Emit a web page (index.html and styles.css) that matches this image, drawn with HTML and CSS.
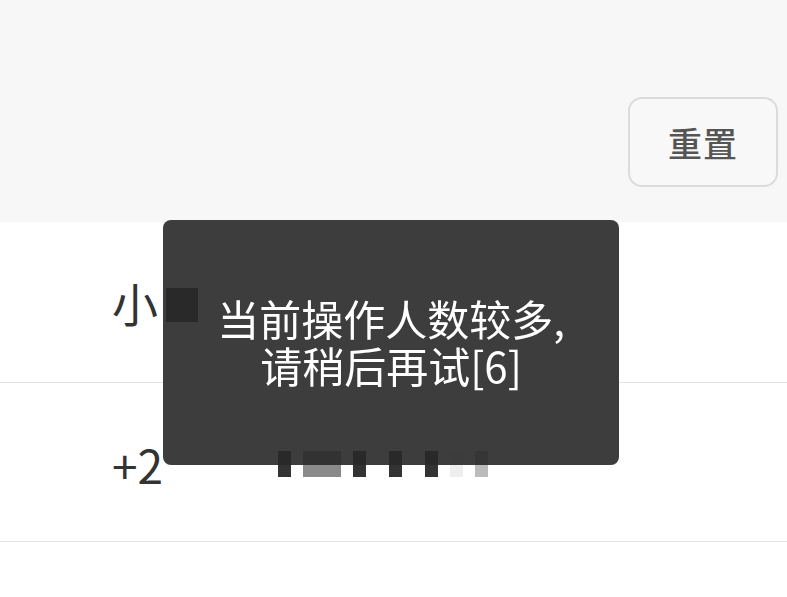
FILE: index.html
```html
<!DOCTYPE html>
<html lang="zh-CN">
<head>
    <meta charset="UTF-8">
    <meta name="viewport" content="width=device-width, initial-scale=1.0">
    <title>重置</title>
    <link rel="stylesheet" href="styles.css">
</head>
<body>
    <div class="header">
        <button class="btn-reset">重置</button>
    </div>

    <div class="list">
        <div class="row">
            <span class="label">小</span>
            <span class="mosaic mosaic-name">
                <i class="tile tile-dark tile-tall"></i>
            </span>
        </div>
        <div class="row">
            <span class="label">+2</span>
            <span class="mosaic mosaic-phone">
                <i class="tile tile-dark"></i>
                <i class="tile tile-gap"></i>
                <i class="tile tile-mid tile-wide"></i>
                <i class="tile tile-gap"></i>
                <i class="tile tile-dark"></i>
                <i class="tile tile-gap tile-wide-gap"></i>
                <i class="tile tile-dark"></i>
                <i class="tile tile-gap tile-wide-gap"></i>
                <i class="tile tile-dark"></i>
                <i class="tile tile-gap"></i>
                <i class="tile tile-faint"></i>
                <i class="tile tile-gap"></i>
                <i class="tile tile-light"></i>
            </span>
        </div>
    </div>

    <div class="toast">当前操作人数较多,<br>请稍后再试[6]</div>
</body>
</html>
```

FILE: styles.css
```css
* {
    margin: 0;
    padding: 0;
    box-sizing: border-box;
}

body {
    font-family: "Noto Sans CJK SC", "Noto Sans", sans-serif;
    background: #fff;
    width: 787px;
    height: 597px;
    overflow: hidden;
}

.header {
    height: 222px;
    background: #f7f7f7;
    display: flex;
    justify-content: flex-end;
    align-items: flex-start;
    padding: 97px 9px 0 0;
}

.btn-reset {
    width: 150px;
    height: 90px;
    border: 2px solid #dcdcdc;
    border-radius: 14px;
    background: #f8f8f8;
    color: #555;
    font-family: inherit;
    font-size: 34px;
    font-weight: 500;
    letter-spacing: 1px;
}

.row {
    display: flex;
    align-items: center;
    height: 161px;
    padding-left: 112px;
    border-bottom: 1px solid #e3e3e3;
}

.row + .row {
    height: 159px;
    padding-top: 4px;
}

.label {
    font-size: 46px;
    color: #333;
    line-height: 1;
}

.mosaic {
    display: flex;
    align-items: center;
}

.mosaic-name {
    margin-left: 8px;
    margin-top: 6px;
}

.mosaic-phone {
    margin-left: 115px;
    margin-top: 0;
}

.tile {
    display: block;
    width: 13px;
    height: 26px;
}

.tile-tall {
    width: 32px;
    height: 34px;
}

.tile-wide {
    width: 38px;
}

.tile-gap {
    width: 12px;
}

.tile-wide-gap {
    width: 23px;
}

.tile-dark {
    background: #333;
}

.tile-mid {
    background: #8a8a8a;
}

.tile-light {
    background: #bbb;
}

.tile-faint {
    background: #eee;
}

.toast {
    position: fixed;
    left: 163px;
    top: 220px;
    width: 456px;
    height: 245px;
    border-radius: 8px;
    background: rgba(40, 40, 40, 0.9);
    color: #fff;
    font-size: 42px;
    line-height: 47px;
    text-align: center;
    display: flex;
    align-items: center;
    justify-content: center;
    padding: 0 20px 4px;
}
```
